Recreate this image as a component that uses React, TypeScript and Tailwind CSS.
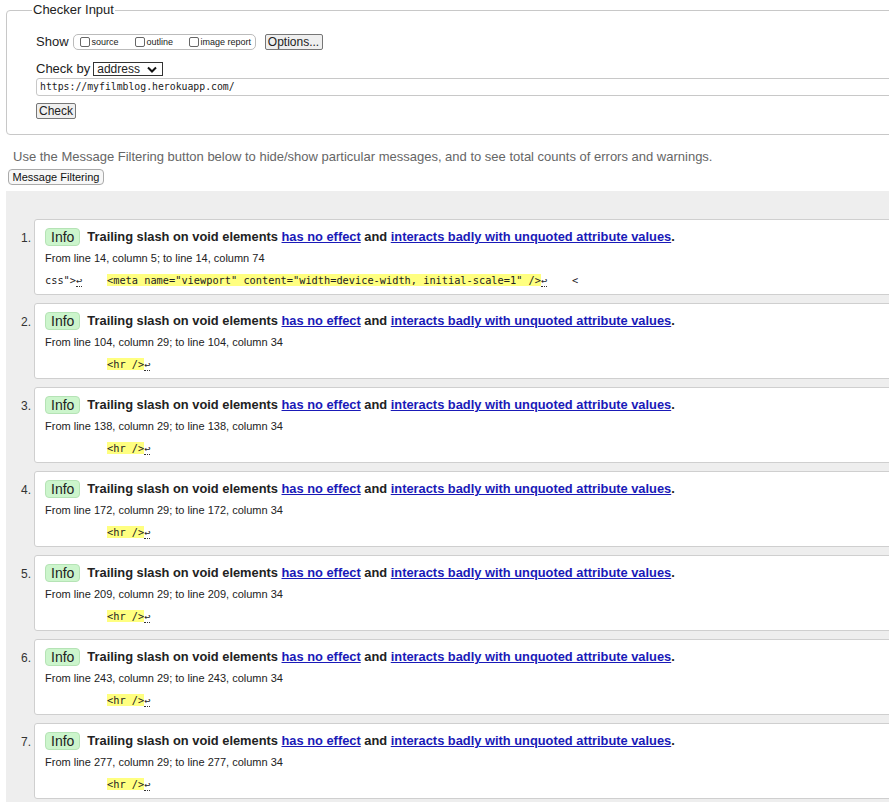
import React from "react";

const sans = "font-['Liberation_Sans',Arial,sans-serif]";
const mono = "font-['DejaVu_Sans_Mono',monospace]";

type Msg = { from: string; to: string; kind: "meta" | "hr" };

const messages: Msg[] = [
  { from: "line 14, column 5", to: "line 14, column 74", kind: "meta" },
  { from: "line 104, column 29", to: "line 104, column 34", kind: "hr" },
  { from: "line 138, column 29", to: "line 138, column 34", kind: "hr" },
  { from: "line 172, column 29", to: "line 172, column 34", kind: "hr" },
  { from: "line 209, column 29", to: "line 209, column 34", kind: "hr" },
  { from: "line 243, column 29", to: "line 243, column 34", kind: "hr" },
  { from: "line 277, column 29", to: "line 277, column 34", kind: "hr" },
];

function Lf() {
  return <span className="border-b border-dotted border-[#333]">↩</span>;
}

function Checkbox({ label, width }: { label: string; width: string }) {
  return (
    <span className={`flex shrink-0 items-center gap-[2px] whitespace-nowrap ${width}`}>
      <span className="h-[10px] w-[10px] shrink-0 rounded-[2px] border border-[#666] bg-white" />
      <span className="text-[9px] leading-none text-[#222]">{label}</span>
    </span>
  );
}

function CodeLine({ kind }: { kind: Msg["kind"] }) {
  if (kind === "meta") {
    return (
      <div className={`${mono} whitespace-pre text-[10.3px] leading-[16px] text-[#222]`}>
        css"&gt;<Lf />{"    "}
        <span className="bg-[#ffff80]">&lt;meta name="viewport" content="width=device-width, initial-scale=1" /&gt;</span>
        <Lf />
        {"    <"}
      </div>
    );
  }
  return (
    <div className={`${mono} whitespace-pre text-[10.3px] leading-[16px] text-[#222]`}>
      {"          "}
      <span className="bg-[#ffff80]">&lt;hr /&gt;</span>
      <Lf />
    </div>
  );
}

function Message({ n, msg }: { n: number; msg: Msg }) {
  return (
    <div className="flex">
      <div className="mt-[10px] flex h-[18px] w-[28px] shrink-0 items-center justify-end pr-[3px] text-[12px] text-[#333]">
        {n}.
      </div>
      <div className="flex-1 rounded-[3px] border border-[#cfcfcf] bg-white pl-[10px] pt-[8px] pb-[6px]">
        <div className="flex h-[18px] items-center">
          <span className="flex h-[18px] items-center rounded-[4px] border border-[#b5e3b5] bg-[#ccf5cc] px-[5px] text-[14px] text-[#222]">
            Info
          </span>
          <p className="ml-[7px] text-[12.85px] font-bold text-[#222]">
            Trailing slash on void elements{" "}
            <a className="text-[#1a1ab8] underline">has no effect</a> and{" "}
            <a className="text-[#1a1ab8] underline">interacts badly with unquoted attribute values</a>.
          </p>
        </div>
        <p className="mt-[6px] text-[11px] leading-[13px] text-[#222]">
          From {msg.from}; to {msg.to}
        </p>
        <div className="mt-[7px]">
          <CodeLine kind={msg.kind} />
        </div>
      </div>
    </div>
  );
}

export default function App() {
  return (
    <div className={`${sans} h-[802px] w-[889px] overflow-hidden bg-white text-[#222]`}>
      <div className="w-[960px]">
        <fieldset className="ml-[6px] mt-[2px] rounded-[4px] border border-[#c8c8c8] pl-[29px] pb-[15px]">
          <legend className="-ml-[4px] px-[1px] text-[13px] leading-[16px] text-[#222]">Checker Input</legend>

          <div className="mt-[16px] flex h-[16px] items-center">
            <span className="text-[13px]">Show</span>
            <div className="ml-[4px] flex h-[16px] w-[183px] items-center rounded-[5px] border border-[#bbb] pl-[6px]">
              <Checkbox label="source" width="w-[55px]" />
              <Checkbox label="outline" width="w-[54px]" />
              <Checkbox label="image report" width="w-[64px]" />
            </div>
            <button className="ml-[9px] h-[16px] w-[58px] rounded-[2px] border border-[#767676] bg-[#efefef] text-[12px] leading-none">
              Options...
            </button>
          </div>

          <div className="mt-[12px] flex h-[14px] items-center">
            <span className="text-[13px]">Check by</span>
            <div className="ml-[3px] flex h-[14px] w-[70px] items-center justify-between border border-[#333] pl-[3px] pr-[5px]">
              <span className="text-[12px] leading-none">address</span>
              <svg width="10" height="7" viewBox="0 0 10 7" aria-hidden>
                <path d="M1 1.5L5 5.5L9 1.5" stroke="#111" strokeWidth="2" fill="none" />
              </svg>
            </div>
          </div>

          <div className={`${mono} mt-[2px] flex h-[18px] items-center rounded-[3px] border border-[#c8c8c8] pl-[3px] text-[9.8px] text-[#222]`}>
            https://myfilmblog.herokuapp.com/
          </div>

          <button className="mt-[7px] block h-[16px] w-[40px] rounded-[2px] border border-[#767676] bg-[#efefef] text-[12px] leading-none">
            Check
          </button>
        </fieldset>

        <p className="ml-[13px] mt-[14px] text-[13px] leading-[16px] text-[#666]">
          Use the Message Filtering button below to hide/show particular messages, and to see total counts of errors and warnings.
        </p>
        <button className="ml-[8px] mt-[4px] block h-[16px] w-[96px] rounded-[4px] border border-[#aaa] bg-[#f7f7f7] text-[11px] leading-none text-[#111]">
          Message Filtering
        </button>

        <div className="ml-[6px] mt-[6px] flex flex-col gap-[8px] bg-[#eeeeee] pt-[28px] pb-[20px]">
          {messages.map((m, i) => (
            <Message key={i} n={i + 1} msg={m} />
          ))}
        </div>
      </div>
    </div>
  );
}
